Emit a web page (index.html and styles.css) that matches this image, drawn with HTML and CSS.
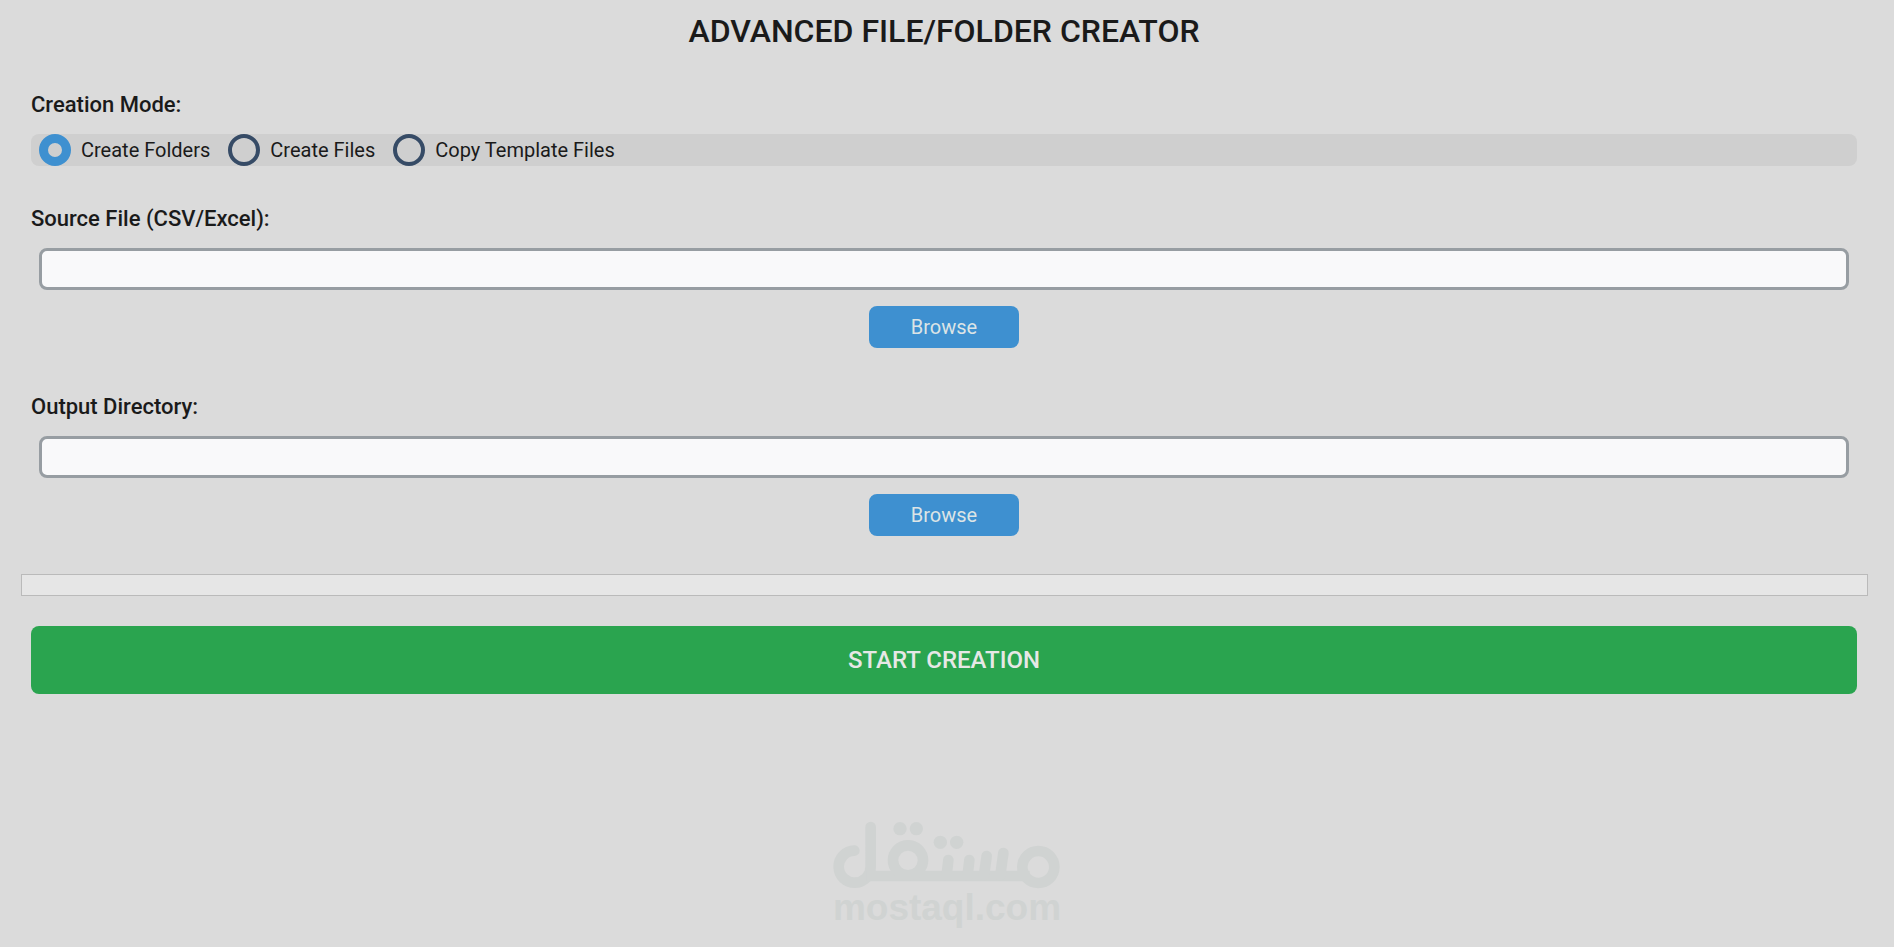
FILE: index.html
```html
<!DOCTYPE html>
<html lang="en">
<head>
    <meta charset="UTF-8">
    <meta name="viewport" content="width=device-width, initial-scale=1.0">
    <title>Advanced File/Folder Creator</title>
    <link rel="stylesheet" href="styles.css">
</head>
<body>
    <main class="app">
        <h1>ADVANCED FILE/FOLDER CREATOR</h1>

        <fieldset class="section">
            <legend class="section-label">Creation Mode:</legend>
            <div class="mode-bar">
                <label class="mode"><input type="radio" name="mode" value="folders" checked>Create Folders</label>
                <label class="mode"><input type="radio" name="mode" value="files">Create Files</label>
                <label class="mode"><input type="radio" name="mode" value="template">Copy Template Files</label>
            </div>
        </fieldset>

        <div class="section picker">
            <label class="section-label" for="source">Source File (CSV/Excel):</label>
            <input type="text" class="path" id="source">
            <button type="button" class="browse">Browse</button>
        </div>

        <div class="section picker">
            <label class="section-label" for="output">Output Directory:</label>
            <input type="text" class="path" id="output">
            <button type="button" class="browse">Browse</button>
        </div>

        <div class="progress" role="progressbar" aria-valuemin="0" aria-valuemax="100" aria-valuenow="0"></div>

        <button type="button" class="start">START CREATION</button>
    </main>

    <footer class="brand">
        <svg class="brand-mark" viewBox="0 0 684 204" aria-hidden="true">
            <g fill="none" stroke="currentColor" stroke-width="32" stroke-linecap="round">
                <path d="M64 89 A48 48 0 1 0 113 137 V18"/>
                <path d="M100 165 H590" stroke-linecap="butt"/>
                <circle cx="225" cy="118" r="45"/>
                <circle cx="616" cy="138" r="48"/>
                <path d="M346 117 L341 163 M409 117 L404 163 M461 105 L453 163 M511 96 L502 163"/>
            </g>
            <g fill="currentColor">
                <circle cx="201" cy="23" r="20"/>
                <circle cx="250" cy="23" r="20"/>
                <circle cx="322" cy="64" r="20"/>
                <circle cx="371" cy="64" r="20"/>
            </g>
        </svg>
        <span class="brand-name">mostaql.com</span>
    </footer>
</body>
</html>
```
FILE: styles.css
```css
* {
    box-sizing: border-box;
}

body {
    margin: 0;
    min-height: 100vh;
    display: flex;
    flex-direction: column;
    justify-content: space-between;
    font-family: Roboto, sans-serif;
    font-size: 20px;
    line-height: 24px;
    color: #1a1a1a;
    background-color: #dbdbdb;
}

.app {
    padding: 12px 37px 0 31px;
}

h1 {
    margin: 0 0 43px;
    font-size: 32px;
    line-height: 38px;
    font-weight: 500;
    text-align: center;
}

.section {
    margin: 0 0 41px;
    padding: 0;
    border: none;
}

.section-label {
    display: block;
    margin-bottom: 17px;
    padding: 0;
    font-size: 22px;
    font-weight: 500;
}

/* Creation mode */
.mode-bar {
    display: flex;
    gap: 18px;
    height: 32px;
    padding: 0 8px;
    border-radius: 8px;
    background-color: #cfcfcf;
}

.mode {
    display: flex;
    align-items: center;
    gap: 10px;
    cursor: pointer;
}

.mode input {
    appearance: none;
    width: 32px;
    height: 32px;
    margin: 0;
    border: 4px solid #364b66;
    border-radius: 50%;
}

.mode input:checked {
    border: 9px solid #3e90d0;
}

/* File pickers */
.picker {
    display: flex;
    flex-direction: column;
}

.path {
    height: 42px;
    margin: 0 8px 16px;
    padding: 0 10px;
    font: inherit;
    border: 3px solid #979da2;
    border-radius: 8px;
    background-color: #f9f9fa;
}

button {
    font-family: inherit;
    border: none;
    border-radius: 8px;
    color: #dce4e6;
    cursor: pointer;
}

.browse {
    align-self: center;
    width: 150px;
    height: 42px;
    margin-bottom: 6px;
    font-size: 20px;
    background-color: #3e90d0;
}

.progress {
    height: 22px;
    margin: -9px -11px 30px -10px;
    border: 1px solid #bababa;
    background-color: #e6e6e6;
}

.start {
    display: block;
    width: 100%;
    height: 68px;
    font-size: 24px;
    font-weight: 500;
    color: #e6e8e6;
    background-color: #2aa44f;
}

/* Watermark */
.brand {
    display: flex;
    flex-direction: column;
    align-items: center;
    padding-bottom: 20px;
    color: #d0d3d2;
}

.brand-mark {
    width: 228px;
}

.brand-name {
    font-family: "Liberation Sans", sans-serif;
    font-size: 37px;
    line-height: 38px;
    font-weight: bold;
}
```
